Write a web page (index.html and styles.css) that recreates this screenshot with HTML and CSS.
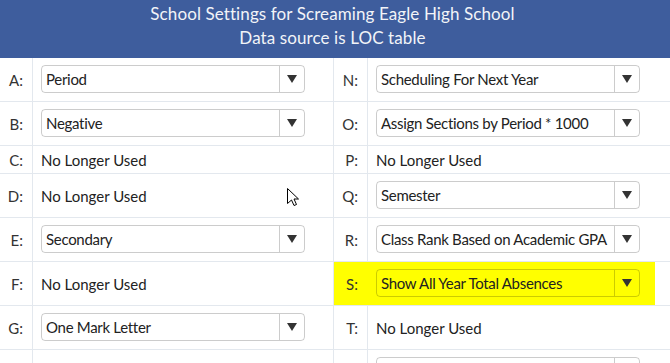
FILE: index.html
```html
<!DOCTYPE html>
<html>
<head>
<meta charset="utf-8">
<link rel="stylesheet" href="styles.css">
</head>
<body>
<div class="page">
  <header class="banner">
    <div>School Settings for Screaming Eagle High School</div>
    <div>Data source is LOC table</div>
  </header>
  <div class="table">
    <div class="row">
      <div class="lbl">A:</div>
      <div class="val"><div class="sel"><span class="txt">Period</span><span class="arr"></span></div></div>
      <div class="lbl">N:</div>
      <div class="val"><div class="sel"><span class="txt">Scheduling For Next Year</span><span class="arr"></span></div></div>
      <div class="pad"></div>
    </div>
    <div class="row">
      <div class="lbl">B:</div>
      <div class="val"><div class="sel"><span class="txt">Negative</span><span class="arr"></span></div></div>
      <div class="lbl">O:</div>
      <div class="val"><div class="sel"><span class="txt">Assign Sections by Period * 1000</span><span class="arr"></span></div></div>
      <div class="pad"></div>
    </div>
    <div class="row">
      <div class="lbl">C:</div>
      <div class="val">No Longer Used</div>
      <div class="lbl">P:</div>
      <div class="val">No Longer Used</div>
      <div class="pad"></div>
    </div>
    <div class="row">
      <div class="lbl">D:</div>
      <div class="val">No Longer Used</div>
      <div class="lbl">Q:</div>
      <div class="val"><div class="sel"><span class="txt">Semester</span><span class="arr"></span></div></div>
      <div class="pad"></div>
    </div>
    <div class="row">
      <div class="lbl">E:</div>
      <div class="val"><div class="sel"><span class="txt">Secondary</span><span class="arr"></span></div></div>
      <div class="lbl">R:</div>
      <div class="val"><div class="sel"><span class="txt">Class Rank Based on Academic GPA</span><span class="arr"></span></div></div>
      <div class="pad"></div>
    </div>
    <div class="row">
      <div class="lbl">F:</div>
      <div class="val">No Longer Used</div>
      <div class="lbl hl">S:</div>
      <div class="val hl"><div class="sel"><span class="txt">Show All Year Total Absences</span><span class="arr"></span></div></div>
      <div class="pad"></div>
    </div>
    <div class="row">
      <div class="lbl">G:</div>
      <div class="val"><div class="sel"><span class="txt">One Mark Letter</span><span class="arr"></span></div></div>
      <div class="lbl">T:</div>
      <div class="val">No Longer Used</div>
      <div class="pad"></div>
    </div>
    <div class="row">
      <div class="lbl"></div>
      <div class="val"></div>
      <div class="lbl"></div>
      <div class="val"><div class="sel"><span class="txt"></span><span class="arr"></span></div></div>
      <div class="pad"></div>
    </div>
  </div>
  <svg class="cursor" width="14" height="20" viewBox="0 0 14 20">
    <path d="M0.5 0.5 L0.5 15.5 L4.5 12 L7 17.5 L9.5 16.5 L7 11 L11.5 11 Z" fill="#fff" stroke="#000" stroke-width="1" stroke-linejoin="miter"/>
  </svg>
</div>
</body>
</html>
```
FILE: styles.css
```css
html, body {
  margin: 0;
  padding: 0;
  background: #fff;
}
.page {
  position: relative;
  width: 670px;
  height: 363px;
  overflow: hidden;
  font-family: Lato, "Liberation Sans", sans-serif;
  font-size: 15px;
  color: #222;
}
.banner {
  height: 58px;
  box-sizing: border-box;
  padding: 2px 5px 0 0;
  background: #3e5d9d;
  color: #f2f4f8;
  text-align: center;
  font-size: 17px;
  letter-spacing: 0.1px;
  line-height: 24px;
}
.table {
  display: flex;
  flex-direction: column;
}
.row {
  display: grid;
  grid-template-columns: 33px 301px 34px 287px 15px;
  border-bottom: 1px solid #e3e8ee;
  min-height: 27px;
}
.lbl, .val {
  display: flex;
  align-items: center;
  border-right: 1px solid #e3e8ee;
  padding-top: 1px;
}
.lbl {
  justify-content: flex-end;
  padding-right: 9px;
  color: #333;
}
.val {
  padding-left: 8px;
}
.row .val:nth-child(4) {
  border-right: none;
}
.hl {
  background: #ffff00;
  border-right-color: #ffff00;
}
.sel {
  display: flex;
  width: 264px;
  height: 28px;
  box-sizing: border-box;
  margin: 6px 0 8px;
  border: 1px solid rgba(0, 0, 0, 0.2);
  border-radius: 4px;
}
.txt {
  flex: 1;
  padding-left: 4px;
  line-height: 26px;
  letter-spacing: -0.3px;
  white-space: nowrap;
  overflow: hidden;
}
.arr {
  width: 24px;
  border-left: 1px solid rgba(0, 0, 0, 0.2);
  display: flex;
  align-items: center;
  justify-content: center;
}
.arr::after {
  content: "";
  width: 0;
  height: 0;
  border-left: 5px solid transparent;
  border-right: 5px solid transparent;
  border-top: 8px solid #333;
}
.cursor {
  position: absolute;
  left: 287px;
  top: 188px;
}
```
